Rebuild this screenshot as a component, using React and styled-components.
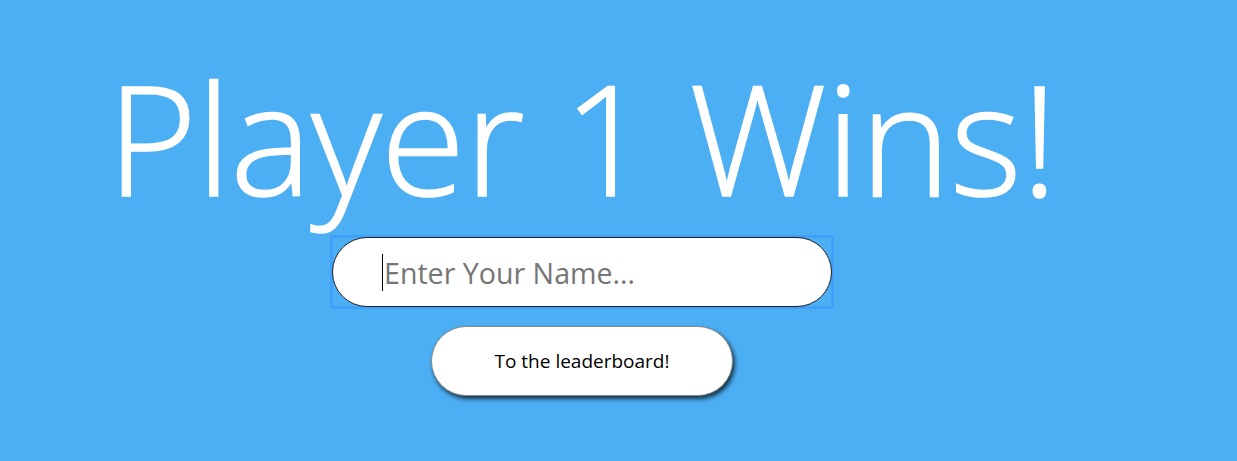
import styled, { createGlobalStyle } from 'styled-components';

const GlobalStyle = createGlobalStyle`
  html, body {
    margin: 0;
    padding: 0;
    background: #4caff4;
    font-family: "Open Sans", "Noto Sans", sans-serif;
  }
`;

// Styled Components
const Page = styled.div`
  width: 1164px;
  height: 461px;
  display: flex;
  flex-direction: column;
  align-items: center;
  padding-top: 51px;
  box-sizing: border-box;
`;

const Title = styled.h1`
  margin: 0;
  color: #ffffff;
  font-weight: 300;
  font-size: 154px;
  line-height: 170px;
  letter-spacing: -0.8px;
  white-space: nowrap;
  -webkit-text-stroke: 1.5px #ffffff;
`;

// focus ring drawn as a square frame, like the old browser outline
const InputFrame = styled.div`
  position: relative;
  margin-top: 14px;
  border: 3px solid #3f9ff9;
  border-radius: 3px;
  line-height: 0;
`;

const NameInput = styled.input`
  display: block;
  width: 500px;
  height: 70px;
  margin: -1px;
  box-sizing: border-box;
  border: 1px solid #222;
  border-radius: 35px;
  background: #fff;
  padding: 0 20px 0 51px;
  font-family: "Open Sans", "Noto Sans", sans-serif;
  font-size: 28.6px;
  color: #222;
  outline: none;

  &::placeholder {
    color: #757575;
  }
`;

const Caret = styled.span`
  position: absolute;
  left: 49px;
  top: 16px;
  width: 1px;
  height: 37px;
  background: #000;
`;

const BoardButton = styled.button`
  margin-top: 17px;
  width: 302px;
  height: 70px;
  border: 1px solid #888;
  border-radius: 35px;
  background: #fff;
  box-shadow: 2px 3px 4px rgba(0, 0, 0, 0.7);
  font-family: "Open Sans", "Noto Sans", sans-serif;
  font-size: 19px;
  color: #000;
  cursor: pointer;
`;

export default function App() {
  return (
    <>
      <GlobalStyle />
      <Page>
        <Title>Player 1 Wins!</Title>
        <InputFrame>
          <NameInput type="text" placeholder="Enter Your Name..." />
          <Caret />
        </InputFrame>
        <BoardButton>To the leaderboard!</BoardButton>
      </Page>
    </>
  );
}
